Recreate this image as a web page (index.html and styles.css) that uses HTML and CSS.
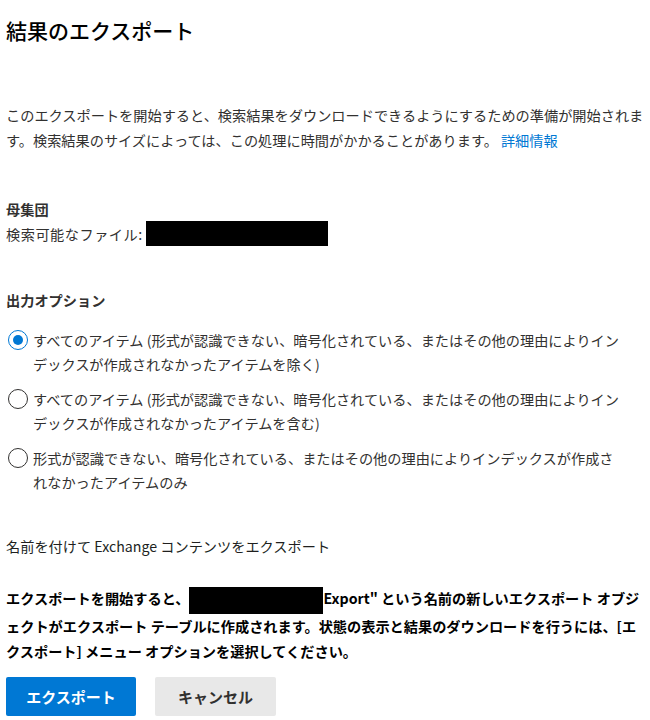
FILE: index.html
```html
<!DOCTYPE html>
<html lang="ja">
<head>
    <meta charset="UTF-8">
    <meta name="viewport" content="width=device-width, initial-scale=1.0">
    <title>結果のエクスポート</title>
    <link rel="stylesheet" href="styles.css">
</head>
<body>
    <div class="panel">
        <h1>結果のエクスポート</h1>

        <p class="intro">
            このエクスポートを開始すると、検索結果をダウンロードできるようにするための準備が開始されます。検索結果のサイズによっては、この処理に時間がかかることがあります。<a href="#" class="link">詳細情報</a>
        </p>

        <div class="section population">
            <h2>母集団</h2>
            <div class="stat">検索可能なファイル:<span class="redacted redacted-count"></span></div>
        </div>

        <div class="section">
            <h2 class="options-title">出力オプション</h2>
            <div class="options">
                <label class="option">
                    <span class="radio checked"></span>
                    <span class="option-text">すべてのアイテム (形式が認識できない、暗号化されている、またはその他の理由によりインデックスが作成されなかったアイテムを除く)</span>
                </label>
                <label class="option">
                    <span class="radio"></span>
                    <span class="option-text">すべてのアイテム (形式が認識できない、暗号化されている、またはその他の理由によりインデックスが作成されなかったアイテムを含む)</span>
                </label>
                <label class="option">
                    <span class="radio"></span>
                    <span class="option-text">形式が認識できない、暗号化されている、またはその他の理由によりインデックスが作成されなかったアイテムのみ</span>
                </label>
            </div>
        </div>

        <h3 class="exchange">名前を付けて Exchange コンテンツをエクスポート</h3>

        <p class="notice">
            エクスポートを開始すると、<span class="redacted redacted-name"></span>Export" という名前の新しいエクスポート オブジェクトがエクスポート テーブルに作成されます。状態の表示と結果のダウンロードを行うには、[エクスポート] メニュー オプションを選択してください。
        </p>

        <div class="actions">
            <button class="btn btn-primary">エクスポート</button>
            <button class="btn btn-default">キャンセル</button>
        </div>
    </div>
</body>
</html>
```

FILE: styles.css
```css
body {
    font-family: "Noto Sans CJK JP", "Noto Sans", sans-serif;
    margin: 0;
    padding: 0 6px;
    background: white;
    color: #323130;
    font-size: 14.2px;
}
.panel {
    width: 642px;
}
h1 {
    font-size: 21px;
    font-weight: 500;
    line-height: 30px;
    margin: 15px 0 0;
    color: #000;
}
.intro {
    line-height: 25px;
    margin: 58px 0 0;
}
.link {
    color: #0078d4;
    text-decoration: none;
    margin-left: 3px;
}
h2, h3 {
    font-size: 14.2px;
    font-weight: 700;
    line-height: 24px;
    margin: 0;
}
.population {
    margin-top: 44px;
}
.stat {
    line-height: 24px;
    display: flex;
    align-items: center;
    letter-spacing: 0.5px;
}
.redacted {
    display: inline-block;
    background: #000;
    vertical-align: middle;
}
.redacted-count {
    width: 182px;
    height: 25px;
    margin-left: 3px;
}
.options-title {
    margin-top: 42px;
}
.options {
    margin-top: 16px;
    display: flex;
    flex-direction: column;
    gap: 11px;
}
.option {
    display: flex;
    align-items: flex-start;
    gap: 5px;
    padding-left: 2px;
}
.radio {
    flex: none;
    width: 18px;
    height: 18px;
    border: 1px solid #323130;
    border-radius: 50%;
    margin-top: 2px;
    position: relative;
}
.radio.checked {
    border-color: #0078d4;
}
.radio.checked::after {
    content: "";
    position: absolute;
    left: 4px;
    top: 4px;
    width: 10px;
    height: 10px;
    border-radius: 50%;
    background: #0078d4;
}
.option-text {
    line-height: 24px;
    width: 594px;
}
.exchange {
    font-weight: 400;
    color: #201f1e;
    margin-top: 40px;
}
.notice {
    color: #000;
    font-weight: 700;
    line-height: 25px;
    margin: 28px 0 0;
}
.redacted-name {
    width: 134px;
    height: 27px;
}
.actions {
    display: flex;
    gap: 19px;
    margin-top: 13px;
}
.btn {
    font-family: inherit;
    font-size: 15px;
    font-weight: 700;
    height: 39px;
    border: none;
    border-radius: 2px;
    padding: 0;
}
.btn-primary {
    width: 130px;
    background: #0078d4;
    color: white;
}
.btn-default {
    width: 121px;
    background: #e8e8e8;
    color: #323130;
}
```
